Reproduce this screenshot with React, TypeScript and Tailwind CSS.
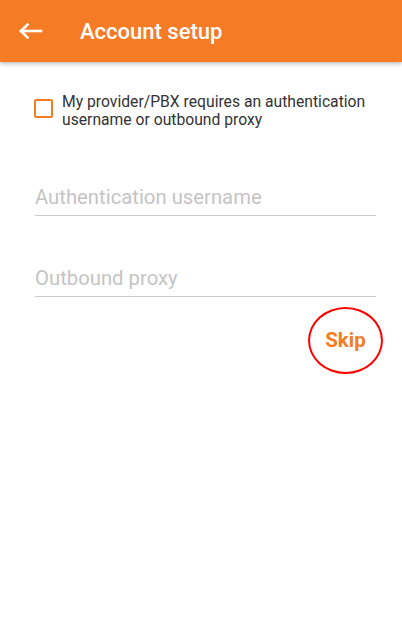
export default function App() {
  return (
    <div className="w-[402px] h-[636px] bg-white font-['Roboto',sans-serif] overflow-hidden">
      {/* Toolbar */}
      <div className="h-[62px] bg-[#f57c24] flex items-center shadow-[0_2px_4px_rgba(0,0,0,0.25)] relative z-10">
        <div className="w-[80px] pl-[18px] flex items-center">
          <svg width="25" height="18" viewBox="0 0 25 18" fill="none" stroke="white" strokeWidth="2.6" strokeLinecap="square">
            <path d="M3 9H23" />
            <path d="M9.5 2.5L3 9L9.5 15.5" />
          </svg>
        </div>
        <span className="text-white text-[22px] font-medium">Account setup</span>
      </div>

      <div className="pl-[35px] pr-[26px] pt-[31px]">
        <label className="flex items-start gap-[9px]">
          <span className="mt-[6px] w-[19px] h-[19px] border-2 border-[#f57c24] rounded-[2px] shrink-0 -ml-px" />
          <span className="text-[15.7px] leading-[18px] text-[#333333]">
            My provider/PBX requires an authentication username or outbound proxy
          </span>
        </label>

        <div className="mt-[47px] h-[40px] border-b border-[#cccccc] flex items-center pt-[3px]">
          <span className="text-[20.3px] text-[#c4c4c4]">Authentication username</span>
        </div>
        <div className="mt-[41px] h-[40px] border-b border-[#cccccc] flex items-center pt-[3px]">
          <span className="text-[20.3px] text-[#c4c4c4]">Outbound proxy</span>
        </div>

        <div className="flex justify-end mt-[10px] -mr-[7px]">
          <div className="w-[75px] h-[67px] rounded-[50%] border-2 border-[#ff0000] flex items-center justify-center">
            <span className="text-[20.5px] font-bold text-[#f57c24]">Skip</span>
          </div>
        </div>
      </div>
    </div>
  );
}
